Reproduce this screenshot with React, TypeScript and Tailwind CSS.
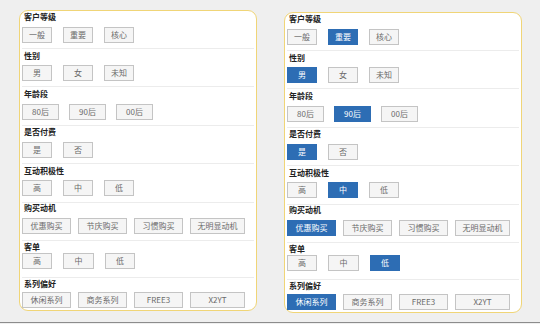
import React from "react";

type Sec = {
  label: string;
  items: [string, string][]; // text, width class
  gapCls: string;
  ptCls: string;
  midCls: string;
  pbCls: string;
};

const sections: Sec[] = [
  { label: "客户等级", items: [["一般", "w-[30px]"], ["重要", "w-[30px]"], ["核心", "w-[30px]"]], gapCls: "gap-[11px]", ptCls: "pt-[1px]", midCls: "mt-[5px]", pbCls: "pb-[5px]" },
  { label: "性别", items: [["男", "w-[30px]"], ["女", "w-[30px]"], ["未知", "w-[30px]"]], gapCls: "gap-[11px]", ptCls: "pt-[2px]", midCls: "mt-[4px]", pbCls: "pb-[5px]" },
  { label: "年龄段", items: [["80后", "w-[37px]"], ["90后", "w-[37px]"], ["00后", "w-[37px]"]], gapCls: "gap-[10px]", ptCls: "pt-[2px]", midCls: "mt-[5px]", pbCls: "pb-[5px]" },
  { label: "是否付费", items: [["是", "w-[30px]"], ["否", "w-[30px]"]], gapCls: "gap-[11px]", ptCls: "pt-[1px]", midCls: "mt-[5px]", pbCls: "pb-[5px]" },
  { label: "互动积极性", items: [["高", "w-[30px]"], ["中", "w-[30px]"], ["低", "w-[30px]"]], gapCls: "gap-[11px]", ptCls: "pt-[2px]", midCls: "mt-[4px]", pbCls: "pb-[6px]" },
  { label: "购买动机", items: [["优惠购买", "w-[49px]"], ["节庆购买", "w-[49px]"], ["习惯购买", "w-[49px]"], ["无明显动机", "w-[55px]"]], gapCls: "gap-[7px]", ptCls: "pt-[0px]", midCls: "mt-[5px]", pbCls: "pb-[6px]" },
  { label: "客单", items: [["高", "w-[30px]"], ["中", "w-[31px]"], ["低", "w-[30px]"]], gapCls: "gap-[11px]", ptCls: "pt-[1px]", midCls: "mt-[1px]", pbCls: "pb-[8px]" },
  { label: "系列偏好", items: [["休闲系列", "w-[49px]"], ["商务系列", "w-[49px]"], ["FREE3", "w-[49px]"], ["X2YT", "w-[55px]"]], gapCls: "gap-[7px]", ptCls: "pt-[1px]", midCls: "mt-[3px]", pbCls: "pb-[2px]" },
];

function Card({ selected }: { selected: (number | null)[] }) {
  return (
    <div className="w-[238px] rounded-[9px] border-[1.5px] border-[#f0d577] bg-white px-[2px]">
      {sections.map((s, i) => (
        <div
          key={s.label}
          className={`${s.ptCls} ${s.pbCls} ${i < sections.length - 1 ? "border-b border-[#ececec]" : ""}`}
        >
          <div className="h-[10px] pl-[2px] text-[8px] leading-[10px] font-bold text-[#222]">{s.label}</div>
          <div className={`flex ${s.gapCls} ${s.midCls}`}>
            {s.items.map(([t, w], j) => {
              const on = selected[i] === j;
              return (
                <div
                  key={t}
                  className={`${w} flex h-[16px] items-center justify-center border text-[8px] leading-none ${
                    on
                      ? "border-[#2d6db4] bg-[#2d6db4] text-white"
                      : "border-[#c4c4c4] bg-[#f5f5f5] text-[#6a6a6a]"
                  }`}
                >
                  {t}
                </div>
              );
            })}
          </div>
        </div>
      ))}
    </div>
  );
}

export default function App() {
  return (
    <div
      className="flex h-[324px] w-[540px] flex-col bg-[#efefef]"
      style={{ fontFamily: '"Noto Sans CJK SC", "Noto Sans", sans-serif' }}
    >
      <div className="flex h-[322px] items-start gap-[27px] pl-[19px] pt-[10px]">
        <Card selected={[null, null, null, null, null, null, null, null]} />
        <div className="mt-[2px]">
          <Card selected={[1, 0, 1, 0, 1, 0, 2, 0]} />
        </div>
      </div>
      <div className="h-[1px] bg-[#8c8c8c]" />
    </div>
  );
}
